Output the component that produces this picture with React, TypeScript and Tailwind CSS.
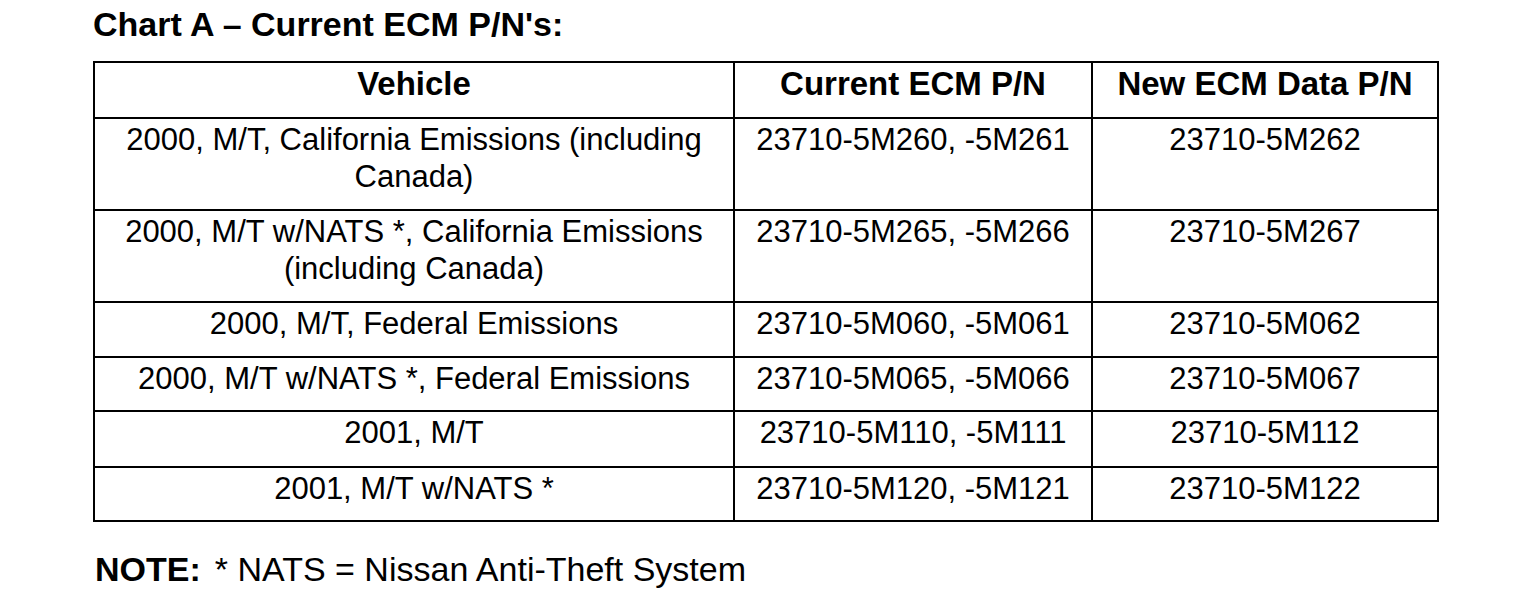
import React from "react";

const rows: { v: string[]; cur: string; next: string; h: string }[] = [
  { v: ["2000, M/T, California Emissions (including", "Canada)"], cur: "23710-5M260, -5M261", next: "23710-5M262", h: "h-[92px]" },
  { v: ["2000, M/T w/NATS *, California Emissions", "(including Canada)"], cur: "23710-5M265, -5M266", next: "23710-5M267", h: "h-[92px]" },
  { v: ["2000, M/T, Federal Emissions"], cur: "23710-5M060, -5M061", next: "23710-5M062", h: "h-[55px]" },
  { v: ["2000, M/T w/NATS *, Federal Emissions"], cur: "23710-5M065, -5M066", next: "23710-5M067", h: "h-[54px]" },
  { v: ["2001, M/T"], cur: "23710-5M110, -5M111", next: "23710-5M112", h: "h-[56px]" },
  { v: ["2001, M/T w/NATS *"], cur: "23710-5M120, -5M121", next: "23710-5M122", h: "h-[54px]" },
];

export default function App() {
  return (
    <div
      className="w-[1520px] h-[610px] bg-white text-black pl-[93px] pt-[4px]"
      style={{ fontFamily: '"Liberation Sans", Arial, sans-serif' }}
    >
      <div className="text-[34px] font-bold leading-[40px]">Chart A – Current ECM P/N's:</div>
      <table className="mt-[17px] border-collapse w-[1344px] table-fixed">
        <colgroup>
          <col className="w-[640px]" />
          <col className="w-[358px]" />
          <col className="w-[346px]" />
        </colgroup>
        <thead>
          <tr className="h-[56px]">
            <th className="border-2 border-black align-top pt-[2px] text-[33px] font-bold leading-[37px] text-center">Vehicle</th>
            <th className="border-2 border-black align-top pt-[2px] text-[33px] font-bold leading-[37px] text-center">Current ECM P/N</th>
            <th className="border-2 border-black align-top pt-[2px] text-[33px] font-bold leading-[37px] text-center">New ECM Data P/N</th>
          </tr>
        </thead>
        <tbody>
          {rows.map((r, i) => (
            <tr key={i} className={r.h}>
              <td className="border-2 border-black align-top pt-[2px] text-[31px] leading-[37px] text-center">
                {r.v.map((l, j) => (
                  <div key={j}>{l}</div>
                ))}
              </td>
              <td className="border-2 border-black align-top pt-[2px] text-[31px] leading-[37px] text-center">{r.cur}</td>
              <td className="border-2 border-black align-top pt-[2px] text-[31px] leading-[37px] text-center">{r.next}</td>
            </tr>
          ))}
        </tbody>
      </table>
      <div className="mt-[27px] ml-[2px] text-[34px] leading-[40px] flex">
        <span className="font-bold">NOTE:</span>
        <span className="ml-[14px]">* NATS = Nissan Anti-Theft System</span>
      </div>
    </div>
  );
}
